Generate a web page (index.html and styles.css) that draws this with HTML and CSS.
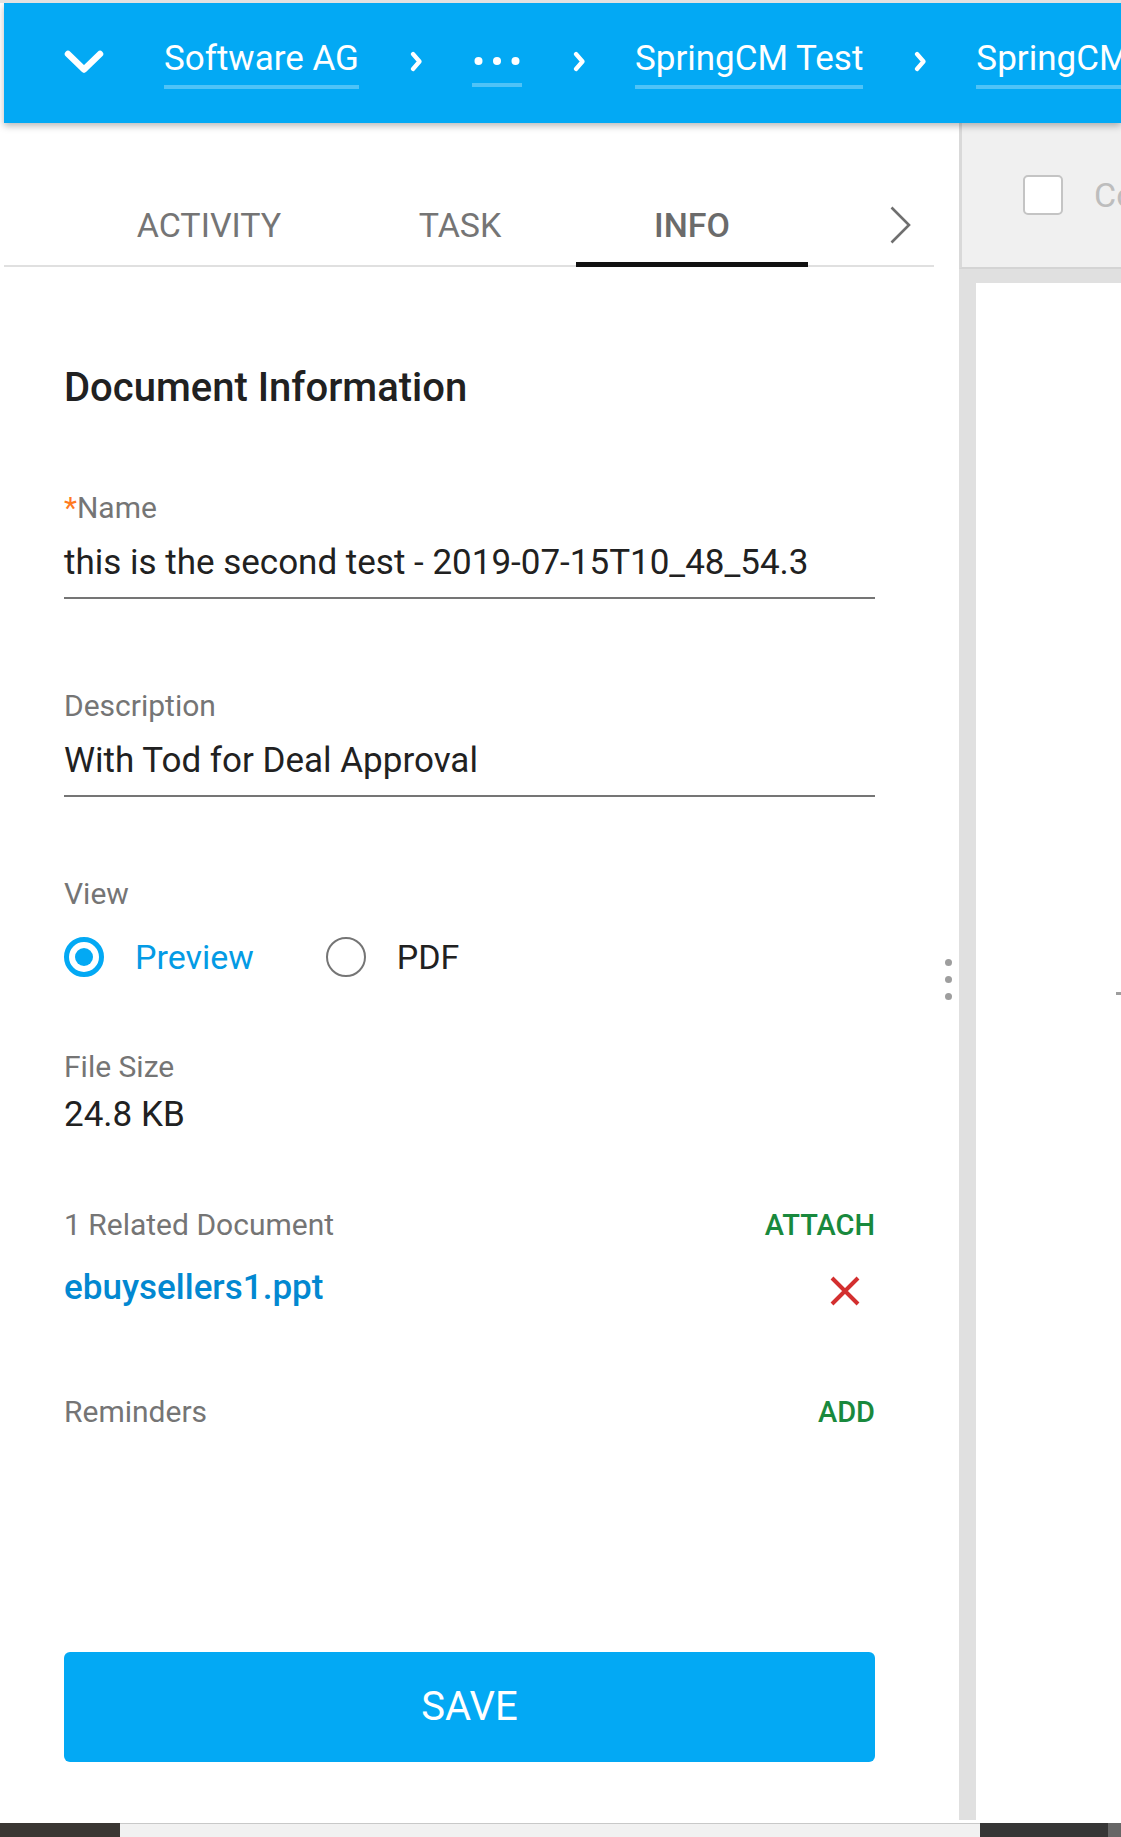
FILE: index.html
```html
<!DOCTYPE html>
<html lang="en">
<head>
<meta charset="utf-8">
<title>Document Information</title>
<link rel="stylesheet" href="styles.css">
</head>
<body>
<div class="topstrip"></div>
<div class="frame">
  <header class="header">
    <svg class="hdr-toggle" viewBox="0 0 40 24" width="40" height="24"><path d="M4 4 L20 19.5 L36 4" fill="none" stroke="#fff" stroke-width="6.5" stroke-linecap="round" stroke-linejoin="round"/></svg>
    <span class="crumb crumb-first">Software AG</span>
    <svg class="sep" viewBox="0 0 12 21" width="12" height="21"><path d="M3 3 L9.5 10.5 L3 18" fill="none" stroke="#fff" stroke-width="4.2" stroke-linecap="round" stroke-linejoin="round"/></svg>
    <span class="crumb crumb-dots"><svg viewBox="0 0 50 42" width="50" height="42"><circle cx="6.5" cy="23" r="4" fill="#fff"/><circle cx="25" cy="23" r="4" fill="#fff"/><circle cx="43.5" cy="23" r="4" fill="#fff"/></svg></span>
    <svg class="sep" viewBox="0 0 12 21" width="12" height="21"><path d="M3 3 L9.5 10.5 L3 18" fill="none" stroke="#fff" stroke-width="4.2" stroke-linecap="round" stroke-linejoin="round"/></svg>
    <span class="crumb">SpringCM Test</span>
    <svg class="sep" viewBox="0 0 12 21" width="12" height="21"><path d="M3 3 L9.5 10.5 L3 18" fill="none" stroke="#fff" stroke-width="4.2" stroke-linecap="round" stroke-linejoin="round"/></svg>
    <span class="crumb">SpringCM</span>
  </header>

  <main class="main">
    <section class="left">
      <nav class="tabs">
        <div class="tabs-spacer"></div>
        <div class="tab tab-wide">Activity</div>
        <div class="tab">Task</div>
        <div class="tab active">Info</div>
        <div class="tab-next"><svg viewBox="0 0 22 38" width="22" height="38"><path d="M2.5 1.5 L20 19 L2.5 36.5" fill="none" stroke="#6f6f6f" stroke-width="2.6"/></svg></div>
      </nav>

      <div class="content">
        <h1 class="title">Document Information</h1>

        <div class="field field-name">
          <div class="field-label"><span class="req">*</span>Name</div>
          <div class="field-input">this is the second test - 2019-07-15T10_48_54.3</div>
        </div>

        <div class="field field-desc">
          <div class="field-label">Description</div>
          <div class="field-input">With Tod for Deal Approval</div>
        </div>

        <div class="field field-view">
          <div class="field-label">View</div>
          <div class="radios">
            <div class="radio-opt"><span class="radio on"></span><span class="radio-text on">Preview</span></div>
            <div class="radio-opt radio-opt-2"><span class="radio"></span><span class="radio-text">PDF</span></div>
          </div>
        </div>

        <div class="field field-size">
          <div class="field-label">File Size</div>
          <div class="field-value">24.8 KB</div>
        </div>

        <div class="row row-related">
          <div class="field-label">1 Related Document</div>
          <div class="action">ATTACH</div>
        </div>
        <div class="row row-link">
          <div class="doc-link">ebuysellers1.ppt</div>
          <svg class="remove" viewBox="0 0 30 30" width="30" height="30"><path d="M2 2 L28 28 M28 2 L2 28" fill="none" stroke="#d32f2f" stroke-width="4"/></svg>
        </div>

        <div class="row row-reminders">
          <div class="field-label">Reminders</div>
          <div class="action">ADD</div>
        </div>

        <button class="save" type="button">SAVE</button>
      </div>

      <div class="kebab"><span></span><span></span><span></span></div>
    </section>

    <section class="right">
      <div class="rtool">
        <span class="checkbox"></span>
        <span class="rtool-text">Co</span>
      </div>
      <div class="rbody">
        <div class="rdoc"><span class="rmark"></span></div>
      </div>
    </section>
  </main>
</div>
<div class="hscroll">
  <div class="hs-left"></div>
  <div class="hs-track"></div>
  <div class="hs-thumb"></div>
  <div class="hs-end"></div>
</div>
</body>
</html>
```

FILE: styles.css
```css
html, body {
  margin: 0;
  padding: 0;
}
body {
  width: 1121px;
  height: 1837px;
  overflow: hidden;
  background: #ffffff;
  font-family: Roboto, "Noto Sans", "Liberation Sans", sans-serif;
}

.topstrip {
  height: 3px;
  background: #e2e2e2;
}

.frame {
  padding-left: 4px;
  overflow: hidden;
}

/* ---------- header ---------- */
.header {
  position: relative;
  z-index: 2;
  height: 120px;
  background: #03a9f4;
  box-shadow: 0 3px 7px rgba(0, 0, 0, 0.28);
  display: flex;
  align-items: flex-start;
  padding-left: 60px;
  white-space: nowrap;
}
.hdr-toggle {
  flex: none;
  display: block;
  margin-top: 47px;
}
.crumb {
  flex: none;
  margin-top: 35px;
  font-size: 35px;
  line-height: 42px;
  color: #ffffff;
  padding-bottom: 5px;
  border-bottom: 4px solid rgba(255, 255, 255, 0.3);
}
.crumb-first {
  margin-left: 60px;
}
.crumb-dots {
  padding-bottom: 3px;
}
.crumb-dots svg {
  display: block;
}
.sep {
  flex: none;
  display: block;
  margin: 48px 50px 0 51px;
}

/* ---------- main ---------- */
.main {
  display: flex;
  height: 1697px;
}
.left {
  position: relative;
  flex: none;
  width: 955px;
  background: #ffffff;
}

.tabs {
  display: flex;
  width: 930px;
  height: 142px;
  border-bottom: 2px solid #e0e0e0;
}
.tabs-spacer {
  flex: none;
  width: 70px;
}
.tab {
  position: relative;
  flex: none;
  width: 232px;
  padding-top: 82px;
  font-size: 34px;
  line-height: 40px;
  text-align: center;
  text-transform: uppercase;
  color: #757575;
}
.tab-wide {
  width: 270px;
}
.tab.active {
  color: #6b6b6b;
  font-weight: 500;
}
.tab.active::after {
  content: "";
  position: absolute;
  left: 0;
  right: 0;
  bottom: -2px;
  height: 5px;
  background: #111111;
}
.tab-next {
  flex: 1;
  padding-left: 81px;
  padding-top: 83px;
}
.tab-next svg {
  display: block;
}

.content {
  width: 811px;
  padding: 98px 0 0 60px;
}
.title {
  margin: 0;
  font-size: 40px;
  line-height: 46px;
  font-weight: 500;
  color: #212121;
}
.field-label {
  font-size: 30px;
  line-height: 36px;
  color: #757575;
  white-space: nowrap;
}
.req {
  color: #ff7a21;
}
.field-name {
  margin-top: 79px;
}
.field-desc {
  margin-top: 89px;
}
.field-view {
  margin-top: 79px;
}
.field-size {
  margin-top: 72px;
}
.field-input {
  margin-top: 16px;
  font-size: 35px;
  line-height: 42px;
  color: #212121;
  padding-bottom: 13px;
  border-bottom: 2px solid #757575;
  white-space: nowrap;
}
.field-value {
  margin-top: 9px;
  font-size: 35px;
  line-height: 42px;
  color: #212121;
}

.radios {
  margin-top: 25px;
  display: flex;
  align-items: center;
  height: 40px;
}
.radio-opt {
  display: flex;
  align-items: center;
}
.radio-opt-2 {
  margin-left: 72px;
}
.radio {
  box-sizing: border-box;
  width: 40px;
  height: 40px;
  border-radius: 50%;
  border: 2px solid #757575;
  display: flex;
  align-items: center;
  justify-content: center;
}
.radio.on {
  border: 5px solid #03a9f4;
}
.radio.on::before {
  content: "";
  width: 18px;
  height: 18px;
  border-radius: 50%;
  background: #03a9f4;
}
.radio-text {
  margin-left: 31px;
  font-size: 34px;
  line-height: 40px;
  color: #212121;
}
.radio-text.on {
  color: #039be5;
}

.row {
  display: flex;
  justify-content: space-between;
}
.row-related {
  margin-top: 71px;
  align-items: flex-start;
}
.row-link {
  margin-top: 24px;
  align-items: flex-end;
}
.row-reminders {
  margin-top: 85px;
  align-items: flex-start;
}
.action {
  font-size: 29px;
  line-height: 36px;
  font-weight: 500;
  color: #19893d;
}
.doc-link {
  font-size: 35px;
  line-height: 42px;
  font-weight: 500;
  color: #0288d1;
}
.remove {
  display: block;
  margin: 0 15px 3px 0;
}

.save {
  display: flex;
  align-items: center;
  justify-content: center;
  width: 100%;
  height: 110px;
  margin-top: 222px;
  padding: 0;
  border: none;
  border-radius: 6px;
  background: #03a9f4;
  color: #ffffff;
  font-family: inherit;
  font-size: 40px;
  line-height: 48px;
  font-weight: 400;
}

.kebab {
  position: absolute;
  left: 941px;
  top: 836px;
  display: flex;
  flex-direction: column;
  gap: 10px;
}
.kebab span {
  display: block;
  width: 7px;
  height: 7px;
  border-radius: 50%;
  background: #9e9e9e;
}

/* ---------- right pane ---------- */
.right {
  flex: 1;
  min-width: 0;
  overflow: hidden;
  display: flex;
  flex-direction: column;
  background: #e0e0e0;
}
.rtool {
  flex: none;
  height: 144px;
  display: flex;
  align-items: center;
  padding-left: 61px;
  background: #f0f0f0;
  border-left: 3px solid #d9d9d9;
  border-bottom: 2px solid #d4d4d4;
  white-space: nowrap;
}
.checkbox {
  flex: none;
  box-sizing: border-box;
  width: 40px;
  height: 40px;
  border: 2px solid #c4c4c4;
  border-radius: 5px;
  background: #ffffff;
}
.rtool-text {
  margin-left: 31px;
  font-size: 34px;
  line-height: 40px;
  color: #bdbdbd;
}
.rbody {
  flex: 1;
  padding: 14px 0 0 17px;
  display: flex;
}
.rdoc {
  position: relative;
  flex: 1;
  background: #ffffff;
}
.rmark {
  position: absolute;
  left: 140px;
  top: 709px;
  width: 5px;
  height: 3px;
  background: #9e9e9e;
}

/* ---------- bottom scrollbar ---------- */
.hscroll {
  display: flex;
  height: 14px;
  margin-top: 3px;
}
.hs-left {
  width: 120px;
  background: #3a3733;
}
.hs-track {
  box-sizing: border-box;
  width: 860px;
  background: #f1f1f1;
  border-top: 1px solid #c8c8c8;
}
.hs-thumb {
  width: 128px;
  background: #363636;
}
.hs-end {
  flex: 1;
  background: #666666;
}
```
